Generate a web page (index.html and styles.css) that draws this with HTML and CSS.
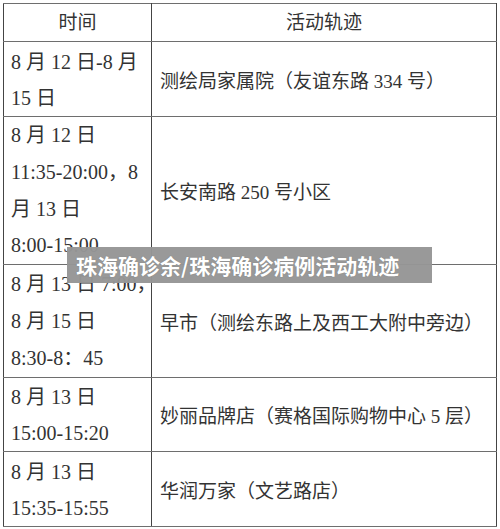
FILE: index.html
```html
<!DOCTYPE html>
<html lang="zh-CN">
<head>
<meta charset="utf-8">
<link rel="stylesheet" href="styles.css">
</head>
<body>
<div class="page">
  <table class="trace">
    <colgroup><col class="c-time"><col class="c-place"></colgroup>
    <tr class="head"><th>时间</th><th>活动轨迹</th></tr>
    <tr class="r1"><td class="time">8 月 12 日-8 月<br>15 日</td><td class="place">测绘局家属院（友谊东路 334 号）</td></tr>
    <tr class="r2"><td class="time">8 月 12 日<br>11:35-20:00，8<br>月 13 日<br>8:00-15:00</td><td class="place">长安南路 250 号小区</td></tr>
    <tr class="r3"><td class="time">8 月 13 日 7:00，<br>8 月 15 日<br>8:30-8：45</td><td class="place">早市（测绘东路上及西工大附中旁边）</td></tr>
    <tr class="r4"><td class="time">8 月 13 日<br>15:00-15:20</td><td class="place">妙丽品牌店（赛格国际购物中心 5 层）</td></tr>
    <tr class="r5"><td class="time">8 月 13 日<br>15:35-15:55</td><td class="place">华润万家（文艺路店）</td></tr>
  </table>
  <div class="caption">珠海确诊余/珠海确诊病例活动轨迹</div>
</div>
</body>
</html>
```
FILE: styles.css
```css
html, body {
  margin: 0;
  padding: 0;
  background: #fff;
}
.page {
  position: relative;
  width: 500px;
  height: 529px;
  padding: 3px;
  box-sizing: border-box;
  overflow: hidden;
}
.trace {
  width: 494px;
  border-collapse: collapse;
  table-layout: fixed;
  font-family: "Liberation Serif", "Noto Sans CJK SC", serif;
  font-size: 20px;
  color: #333;
  border: 1px solid #555;
}
.c-time { width: 148px; }
.trace th, .trace td {
  border-top: 1px solid #6e6e6e;
  border-bottom: 1px solid #6e6e6e;
  border-left: 1px solid #444;
  border-right: 1px solid #444;
  padding: 0 0 0 7px;
  font-weight: normal;
  text-align: left;
  vertical-align: middle;
  white-space: nowrap;
}
.trace th {
  text-align: center;
  padding: 0;
  line-height: 37px;
  font-size: 19px;
}
.trace td.place {
  font-size: 19px;
  padding-left: 8px;
}
.trace td.time {
  vertical-align: top;
}
.trace .r1 td.time { line-height: 36px; padding-top: 2px; }
.trace .r2 td.time { line-height: 36.75px; padding-top: 0; }
.trace .r3 td.time { line-height: 37px; padding-top: 1px; }
.trace .r4 td.time { line-height: 36px; padding-top: 1px; }
.trace .r5 td.time { line-height: 36px; padding-top: 2px; }
.caption {
  position: absolute;
  left: 67px;
  top: 247px;
  width: 365px;
  height: 36px;
  box-sizing: border-box;
  padding-left: 9px;
  background: rgba(150, 150, 150, 0.97);
  color: #fff;
  font-family: "Noto Sans CJK SC", sans-serif;
  font-weight: 700;
  font-size: 21px;
  line-height: 36px;
  white-space: nowrap;
  text-shadow: 0 0 1px rgba(0,0,0,0.25);
}
```
